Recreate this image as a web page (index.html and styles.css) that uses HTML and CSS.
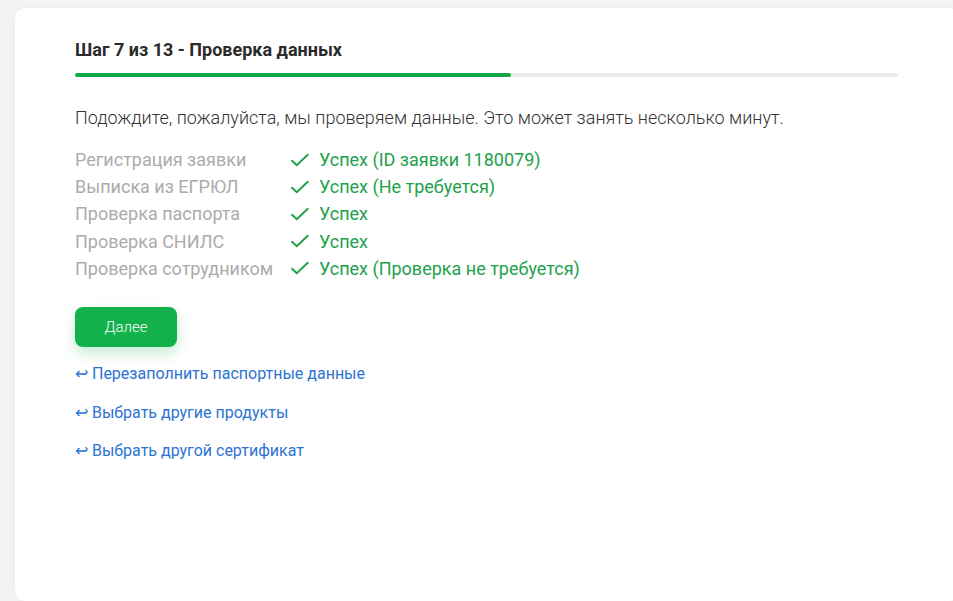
FILE: index.html
```html
<!DOCTYPE html>
<html lang="ru">
<head>
  <meta charset="UTF-8">
  <meta name="viewport" content="width=device-width, initial-scale=1.0">
  <title>Проверка данных</title>
  <link rel="stylesheet" href="styles.css">
</head>
<body>
  <div class="page">
    <div class="card">
      <h2 class="step-title">Шаг 7 из 13 - Проверка данных</h2>
      <div class="progress"><div class="progress-bar" style="width: 53%"></div></div>

      <p class="intro">Подождите, пожалуйста, мы проверяем данные. Это может занять несколько минут.</p>

      <div class="checks">
        <div class="check-row">
          <span class="check-label">Регистрация заявки</span>
          <span class="check-status"><svg class="check-icon" viewBox="0 0 20 14"><path d="M1.5 7.2l5.3 5 11.5-11" fill="none" stroke="currentColor" stroke-width="2"/></svg>Успех (ID заявки 1180079)</span>
        </div>
        <div class="check-row">
          <span class="check-label">Выписка из ЕГРЮЛ</span>
          <span class="check-status"><svg class="check-icon" viewBox="0 0 20 14"><path d="M1.5 7.2l5.3 5 11.5-11" fill="none" stroke="currentColor" stroke-width="2"/></svg>Успех (Не требуется)</span>
        </div>
        <div class="check-row">
          <span class="check-label">Проверка паспорта</span>
          <span class="check-status"><svg class="check-icon" viewBox="0 0 20 14"><path d="M1.5 7.2l5.3 5 11.5-11" fill="none" stroke="currentColor" stroke-width="2"/></svg>Успех</span>
        </div>
        <div class="check-row">
          <span class="check-label">Проверка СНИЛС</span>
          <span class="check-status"><svg class="check-icon" viewBox="0 0 20 14"><path d="M1.5 7.2l5.3 5 11.5-11" fill="none" stroke="currentColor" stroke-width="2"/></svg>Успех</span>
        </div>
        <div class="check-row">
          <span class="check-label">Проверка сотрудником</span>
          <span class="check-status"><svg class="check-icon" viewBox="0 0 20 14"><path d="M1.5 7.2l5.3 5 11.5-11" fill="none" stroke="currentColor" stroke-width="2"/></svg>Успех (Проверка не требуется)</span>
        </div>
      </div>

      <button class="button" type="button">Далее</button>

      <div class="links">
        <a href="#" class="back-link">↩ Перезаполнить паспортные данные</a>
        <a href="#" class="back-link">↩ Выбрать другие продукты</a>
        <a href="#" class="back-link">↩ Выбрать другой сертификат</a>
      </div>
    </div>
  </div>
</body>
</html>
```

FILE: styles.css
```css
html, body {
  margin: 0;
  padding: 0;
  overflow: hidden;
}
body {
  font-family: Roboto, Arial, sans-serif;
  background: #f4f4f4;
  color: #333;
}
.page {
  padding: 8px 0 0 15px;
}
.card {
  width: 823px;
  min-height: 473px;
  background: #fff;
  border-radius: 10px;
  padding: 32px 60px 88px;
  box-shadow: 0 0 12px rgba(0,0,0,0.04);
}
.step-title {
  margin: 0;
  font-size: 18px;
  font-weight: 700;
  line-height: 20px;
  color: #2b2b2b;
}
.progress {
  margin-top: 13px;
  height: 4px;
  background: #ebebeb;
  border-radius: 2px;
}
.progress-bar {
  height: 100%;
  background: #15a84a;
  border-radius: 2px;
}
.intro {
  margin: 29px 0 0;
  font-size: 18px;
  font-weight: 300;
  line-height: 24px;
  color: #333;
}
.checks {
  margin-top: 16px;
}
.check-row {
  display: flex;
  font-size: 18px;
  line-height: 27.2px;
}
.check-label {
  width: 215px;
  color: #ababab;
}
.check-status {
  display: flex;
  align-items: center;
  color: #22a14b;
}
.check-icon {
  width: 20px;
  height: 14px;
  margin-right: 9px;
  color: #22a14b;
}
.button {
  display: block;
  margin-top: 25px;
  width: 102px;
  height: 40px;
  background: #13b14b;
  color: #fff;
  border: none;
  border-radius: 8px;
  font-family: Roboto, Arial, sans-serif;
  font-size: 15px;
  font-weight: 300;
  box-shadow: 0 6px 14px rgba(19,177,75,0.25);
  cursor: pointer;
}
.links {
  display: flex;
  flex-direction: column;
  align-items: flex-start;
  gap: 20.5px;
  margin-top: 18px;
}
.back-link {
  font-size: 16px;
  line-height: 18px;
  color: #2c73d2;
  text-decoration: none;
}
```
